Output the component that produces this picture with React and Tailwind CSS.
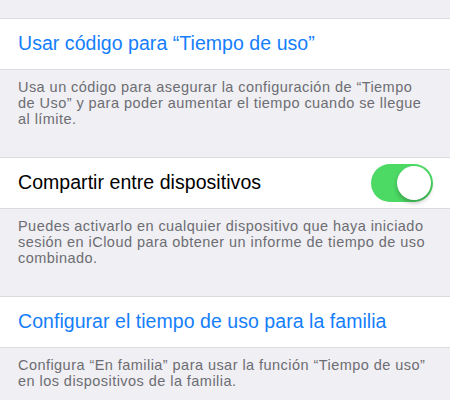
export default function App() {
  return (
    <div className="w-[450px] h-[400px] overflow-hidden bg-[#efeff4] font-['Liberation_Sans',Arial,sans-serif]">
      <div className="h-[18px]" />

      <div className="h-[52px] bg-white border-y border-[#dcdce0] flex items-center px-[18px]">
        <span className="text-[19.5px] tracking-[0.05px] text-[#157efb]">Usar código para “Tiempo de uso”</span>
      </div>
      <p className="px-[18px] pt-[9px] pb-[30px] text-[14.5px] tracking-[0.45px] leading-[16px] text-[#6d6d72]">
        Usa un código para asegurar la configuración de “Tiempo de Uso” y para poder aumentar el tiempo cuando se llegue al límite.
      </p>

      <div className="h-[52px] bg-white border-y border-[#dcdce0] flex items-center justify-between pl-[18px] pr-[17px]">
        <span className="text-[19.5px] tracking-[0.05px] text-black">Compartir entre dispositivos</span>
        <div className="w-[62px] h-[38px] rounded-full bg-[#4cd964] relative">
          <div className="absolute right-[2px] top-[2px] w-[34px] h-[34px] rounded-full bg-white shadow-[0_3px_4px_rgba(0,0,0,0.25)]" />
        </div>
      </div>
      <p className="px-[18px] pt-[9px] pb-[30px] text-[14.5px] tracking-[0.45px] leading-[16px] text-[#6d6d72]">
        Puedes activarlo en cualquier dispositivo que haya iniciado sesión en iCloud para obtener un informe de tiempo de uso combinado.
      </p>

      <div className="h-[52px] bg-white border-y border-[#dcdce0] flex items-center px-[18px]">
        <span className="text-[19.5px] tracking-[0.05px] text-[#157efb]">Configurar el tiempo de uso para la familia</span>
      </div>
      <p className="px-[18px] pt-[9px] pb-[30px] text-[14.5px] tracking-[0.45px] leading-[16px] text-[#6d6d72]">
        Configura “En familia” para usar la función “Tiempo de uso” en los dispositivos de la familia.
      </p>
    </div>
  );
}
